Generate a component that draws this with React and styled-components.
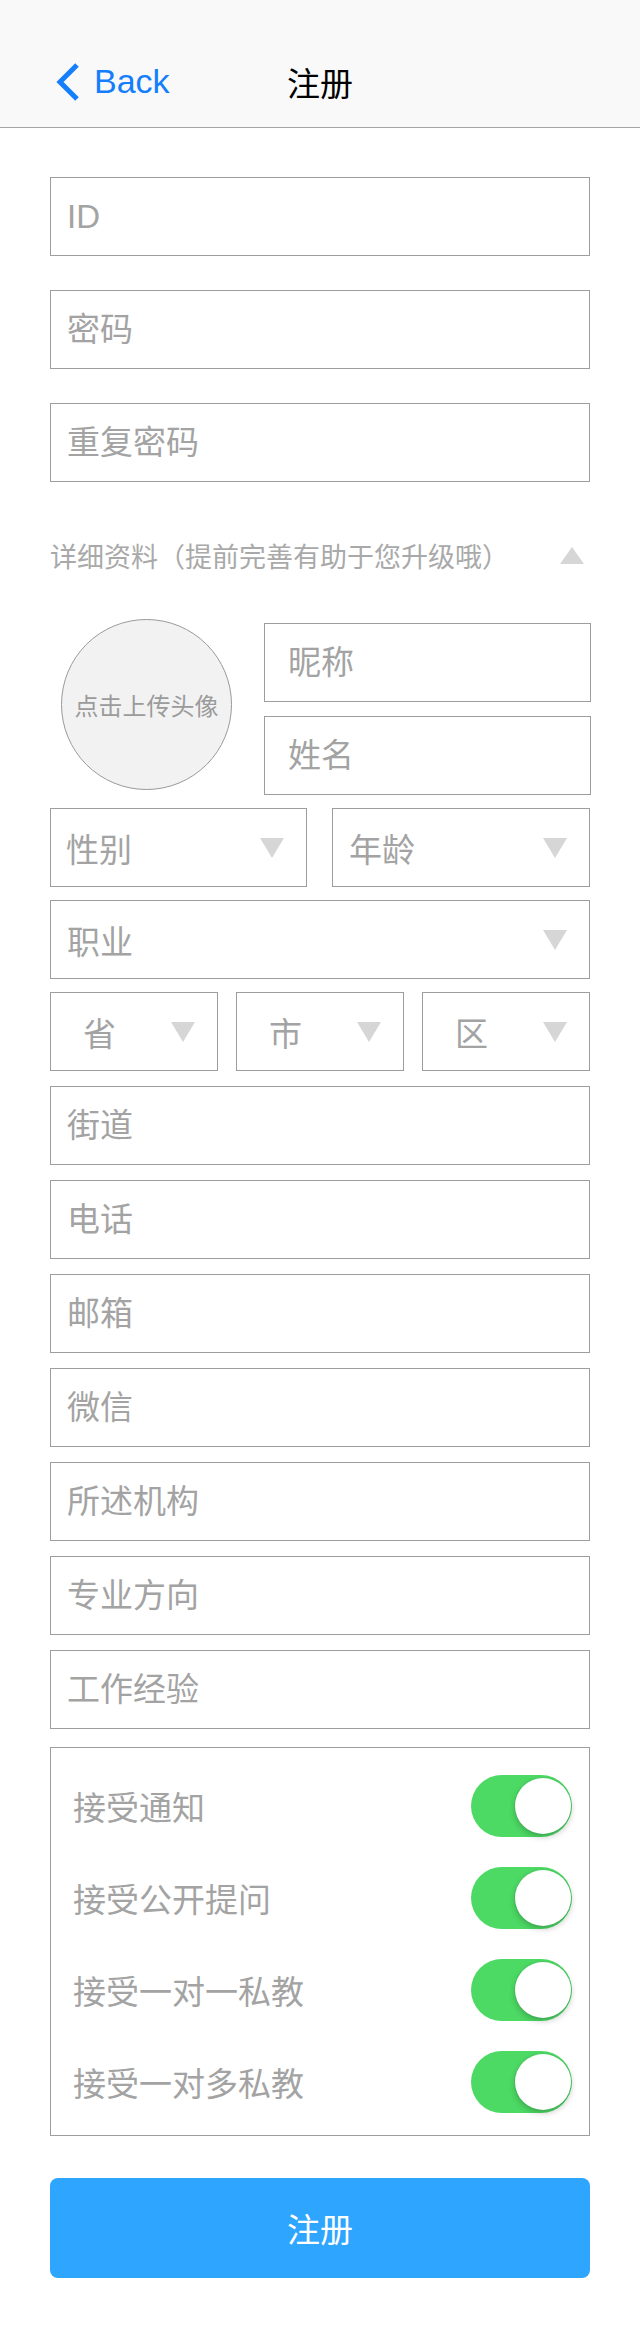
import styled, { createGlobalStyle } from "styled-components";

const GlobalStyle = createGlobalStyle`
  body {
    margin: 0;
    background: #ffffff;
    font-family: "Liberation Sans", "Noto Sans CJK SC", sans-serif;
  }
  * {
    box-sizing: border-box;
  }
`;

const Pagina = styled.div`
  width: 640px;
  padding-bottom: 53px;
`;

const Cabecalho = styled.header`
  height: 128px;
  padding-top: 36px;
  background: #f9f9f9;
  border-bottom: 1px solid #a6a6a6;
  display: grid;
  grid-template-columns: 1fr auto 1fr;
  align-items: center;
`;

const Voltar = styled.div`
  display: flex;
  align-items: center;
  gap: 14px;
  padding-left: 56px;
  color: #147efb;
  font-size: 34px;
`;

const Titulo = styled.h1`
  margin: 0;
  font-size: 33px;
  font-weight: 400;
  color: #000;
`;

const Formulario = styled.form`
  padding: 49px 50px 0;
`;

const Pilha = styled.div`
  display: flex;
  flex-direction: column;
  gap: ${(p) => p.$gap}px;
  margin-top: ${(p) => p.$top || 0}px;
`;

const Campo = styled.input`
  display: block;
  width: 100%;
  height: 79px;
  margin: 0;
  padding: 0 ${(p) => p.$pad || 16}px;
  border: 1px solid #9d9d9d;
  border-radius: 0;
  background: #fff;
  font: inherit;
  font-size: 33px;
  color: #555;
  outline: none;

  &::placeholder {
    color: #a3a3a3;
  }
`;

const Selecao = styled.div`
  flex: 1;
  height: 79px;
  border: 1px solid #9d9d9d;
  display: flex;
  align-items: center;
  justify-content: space-between;
  padding: 0 22px 0 ${(p) => p.$pad || 16}px;
  font-size: 33px;
  color: #a3a3a3;
`;

const Seta = styled.span`
  width: 0;
  height: 0;
  border-left: 12px solid transparent;
  border-right: 12px solid transparent;
  border-${(p) => (p.$up ? "bottom" : "top")}: ${(p) => (p.$up ? 17 : 20)}px solid
    #d6d6d6;
`;

const Secao = styled.div`
  display: flex;
  align-items: center;
  justify-content: space-between;
  height: 28px;
  margin: 59px 0 50px;
  padding-right: 6px;
  font-size: 27px;
  color: #a9a9a9;
`;

const LinhaAvatar = styled.div`
  display: flex;
  align-items: flex-start;
  gap: 32px;
`;

const Avatar = styled.div`
  flex: none;
  width: 171px;
  height: 171px;
  margin-left: 11px;
  border-radius: 50%;
  border: 1px solid #9a9a9a;
  background: #f2f2f2;
  display: flex;
  align-items: center;
  justify-content: center;
  font-size: 24px;
  color: #9b9b9b;
`;

const ColunaNome = styled.div`
  flex: 1;
  display: flex;
  flex-direction: column;
  gap: 14px;
  margin: 4px -1px 0 0;
`;

const Linha = styled.div`
  display: flex;
  gap: ${(p) => p.$gap}px;
`;

const CaixaOpcoes = styled.div`
  margin-top: 18px;
  border: 1px solid #9d9d9d;
  padding: 27px 17px 22px 22px;
  display: flex;
  flex-direction: column;
  gap: 30px;
`;

const Opcao = styled.div`
  height: 62px;
  display: flex;
  align-items: center;
  justify-content: space-between;
  font-size: 33px;
  color: #a3a3a3;
`;

const Chave = styled.div`
  width: 101px;
  height: 62px;
  border-radius: 31px;
  background: #4cd964;
  display: flex;
  align-items: center;
  justify-content: flex-end;
  padding-right: 1px;
`;

const Botao = styled.div`
  width: 56px;
  height: 56px;
  border-radius: 50%;
  background: #fff;
  box-shadow: 0 3px 6px rgba(0, 0, 0, 0.22), 0 0 0 1px rgba(0, 0, 0, 0.04);
`;

const Registrar = styled.button`
  display: block;
  width: 100%;
  height: 100px;
  margin-top: 42px;
  border: none;
  border-radius: 8px;
  background: #2ea5ff;
  color: #fff;
  font: inherit;
  font-size: 33px;
`;

function Select({ texto, pad }) {
  return (
    <Selecao $pad={pad}>
      <span>{texto}</span>
      <Seta />
    </Selecao>
  );
}

export default function App() {
  const contato = ["街道", "电话", "邮箱", "微信", "所述机构", "专业方向", "工作经验"];
  const opcoes = ["接受通知", "接受公开提问", "接受一对一私教", "接受一对多私教"];

  return (
    <Pagina>
      <GlobalStyle />
      <Cabecalho>
        <Voltar>
          <svg width="24" height="40" viewBox="0 0 24 40">
            <polyline
              points="21,3 4,20 21,37"
              fill="none"
              stroke="#147efb"
              strokeWidth="5"
            />
          </svg>
          Back
        </Voltar>
        <Titulo>注册</Titulo>
        <div />
      </Cabecalho>

      <Formulario onSubmit={(e) => e.preventDefault()}>
        <Pilha $gap={34}>
          <Campo placeholder="ID" />
          <Campo placeholder="密码" type="password" />
          <Campo placeholder="重复密码" type="password" />
        </Pilha>

        <Secao>
          <span>详细资料（提前完善有助于您升级哦）</span>
          <Seta $up />
        </Secao>

        <Pilha $gap={13}>
          <LinhaAvatar>
            <Avatar>点击上传头像</Avatar>
            <ColunaNome>
              <Campo placeholder="昵称" $pad={23} />
              <Campo placeholder="姓名" $pad={23} />
            </ColunaNome>
          </LinhaAvatar>
          <Linha $gap={25}>
            <Select texto="性别" pad={15} />
            <Select texto="年龄" pad={16} />
          </Linha>
          <Linha $gap={0}>
            <Select texto="职业" />
          </Linha>
          <Linha $gap={18}>
            <Select texto="省" pad={32} />
            <Select texto="市" pad={32} />
            <Select texto="区" pad={32} />
          </Linha>
        </Pilha>

        <Pilha $gap={15} $top={15}>
          {contato.map((item) => (
            <Campo key={item} placeholder={item} />
          ))}
        </Pilha>

        <CaixaOpcoes>
          {opcoes.map((item) => (
            <Opcao key={item}>
              <span>{item}</span>
              <Chave>
                <Botao />
              </Chave>
            </Opcao>
          ))}
        </CaixaOpcoes>

        <Registrar type="submit">注册</Registrar>
      </Formulario>
    </Pagina>
  );
}
